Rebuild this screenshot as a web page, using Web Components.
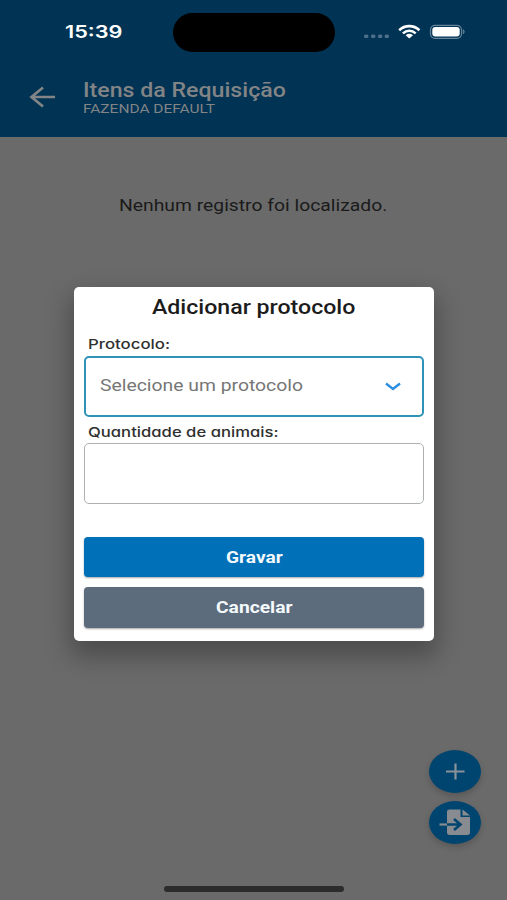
<!DOCTYPE html>
<html lang="pt-BR">
<head>
<meta charset="utf-8">
<meta name="viewport" content="width=device-width, initial-scale=1">
<title>Itens da Requisição</title>
<style>
  html, body {
    margin: 0;
    height: 100%;
  }
  body {
    font-family: Roboto, "Liberation Sans", sans-serif;
    overflow: hidden;
  }
</style>
</head>
<body>
<app-screen>
  <app-header slot="header">
    <status-bar slot="status" time="15:39"></status-bar>
    <wide-text slot="title" width="203">Itens da Requisição</wide-text>
    <wide-text slot="subtitle" width="132">FAZENDA DEFAULT</wide-text>
  </app-header>
  <wide-text class="empty" width="268">Nenhum registro foi localizado.</wide-text>
  <fab-button slot="actions" icon="add"></fab-button>
  <fab-button slot="actions" icon="import"></fab-button>
  <modal-card slot="modal">
    <wide-text slot="title" width="204">Adicionar protocolo</wide-text>
    <form-field active>
      <wide-text slot="label" width="82">Protocolo:</wide-text>
      <wide-text width="203">Selecione um protocolo</wide-text>
    </form-field>
    <form-field>
      <wide-text slot="label" width="190">Quantidade de animais:</wide-text>
    </form-field>
    <action-button slot="buttons"><wide-text width="57">Gravar</wide-text></action-button>
    <action-button slot="buttons" color="#5d6c7d"><wide-text width="77">Cancelar</wide-text></action-button>
  </modal-card>
</app-screen>

<script>
// text stretched to a given width
class WideText extends HTMLElement {
  connectedCallback() {
    const width = Number(this.getAttribute("width"));
    const shadowRoot = this.attachShadow({ mode: "open" });
    shadowRoot.innerHTML = `
      <style>
        :host {
          display: block;
          width: ${width}px;
          white-space: nowrap;
        }
        span {
          display: inline-block;
          transform-origin: 0 50%;
        }
      </style>
      <span><slot></slot></span>`;
    const span = shadowRoot.querySelector("span");
    span.style.transform = `scaleX(${width / span.offsetWidth})`;
  }
}

class StatusBar extends HTMLElement {
  connectedCallback() {
    const shadowRoot = this.attachShadow({ mode: "open" });
    shadowRoot.innerHTML = `
      <style>
        :host {
          display: grid;
          grid-template-columns: 173px 162px 1fr;
          height: 39px;
          padding-top: 13px;
          color: #fff;
        }
        .time {
          padding-left: 64.5px;
          font: 600 17.5px/38px Inter, sans-serif;
        }
        .island {
          border-radius: 20px;
          background: #000;
        }
        .icons {
          display: flex;
          padding-left: 29px;
        }
      </style>
      <div class="time"><wide-text width="57">${this.getAttribute("time")}</wide-text></div>
      <div class="island"></div>
      <div class="icons">
        <svg width="104" height="39" viewBox="364 13 104 39">
          <g fill="#4c708a">
            <rect x="364" y="34.5" width="4.4" height="3.6" rx="1.6"/>
            <rect x="371" y="34.5" width="4.4" height="3.6" rx="1.6"/>
            <rect x="378" y="34.5" width="4.4" height="3.6" rx="1.6"/>
            <rect x="384.600" y="34.5" width="4.4" height="3.6" rx="1.6"/>
          </g>
          <g fill="none" stroke="#fff" stroke-width="2.6">
            <path d="M399.200 30.200C405 24.700 413.600 24.700 419.400 30.200"/>
            <path d="M402.900 33.400C406.800 29.900 411.800 29.900 415.700 33.400"/>
          </g>
          <path d="M405.600 35.200Q409.300 32.300 413 35.200L409.300 38.500Z" fill="#fff"/>
          <rect x="430.500" y="25.300" width="31" height="13" rx="4.500" fill="none" stroke="#67859a" stroke-width="1.200"/>
          <rect x="432.300" y="27" width="27.400" height="9.600" rx="3" fill="#fff"/>
          <path d="M463.300 29.600Q465.400 31.800 463.300 34Z" fill="#67859a" stroke="#67859a" stroke-width=".6"/>
        </svg>
      </div>`;
  }
}

class AppHeader extends HTMLElement {
  connectedCallback() {
    const shadowRoot = this.attachShadow({ mode: "open" });
    shadowRoot.innerHTML = `
      <style>
        :host {
          display: block;
          height: 137px;
          background: #003354;
          color: #828486;
        }
        .bar {
          display: flex;
          padding: 26px 0 0 29px;
        }
        svg {
          margin: 8px 27px 0 0;
        }
        .title {
          height: 23px;
          padding-top: 1px;
          font: 500 19.5px/24px Roboto, sans-serif;
        }
        .subtitle {
          font: 400 13px/14px Roboto, sans-serif;
        }
      </style>
      <slot name="status"></slot>
      <div class="bar">
        <svg width="27" height="22" viewBox="0 0 27 22" fill="none" stroke="#828486" stroke-width="2.700">
          <path d="M26 11H3M14 1.500L2.500 11L14 20.500"/>
        </svg>
        <div>
          <div class="title"><slot name="title"></slot></div>
          <div class="subtitle"><slot name="subtitle"></slot></div>
        </div>
      </div>`;
  }
}

class FabButton extends HTMLElement {
  icons() {
    return {
      add: `<path d="M26.500 13.500V29.500M17 21.500H35.500" stroke="#8a9299" stroke-width="2.200"/>`,
      import: `
        <path d="M20.500 8.500H31.500V16H41V31.500Q41 34 38 34H21Q18 34 18 31.500V10.500Q18 8.500 20.500 8.500Z" fill="#888c90"/>
        <path d="M33.500 8.500L41 14.500H33.500Z" fill="#888c90"/>
        <path d="M10.500 23.500H18" stroke="#888c90" stroke-width="2.200"/>
        <path d="M18 23.500H31.500M25 18L31.500 23.500L25 29" fill="none" stroke="#00456f" stroke-width="2.600"/>`,
    }[this.getAttribute("icon")];
  }
  connectedCallback() {
    const shadowRoot = this.attachShadow({ mode: "open" });
    shadowRoot.innerHTML = `
      <style>
        :host {
          display: block;
          width: 52px;
          height: 43px;
          border-radius: 50%;
          background: #00456f;
          box-shadow: 0 3px 6px rgba(0, 0, 0, .18);
        }
        svg {
          display: block;
        }
      </style>
      <svg width="52" height="43" viewBox="0 0 52 43">${this.icons()}</svg>`;
  }
}

class FormField extends HTMLElement {
  connectedCallback() {
    const active = this.hasAttribute("active");
    const shadowRoot = this.attachShadow({ mode: "open" });
    shadowRoot.innerHTML = `
      <style>
        :host {
          display: block;
        }
        .label {
          box-sizing: border-box;
          height: 26px;
          padding: ${active ? "1px" : "2px"} 0 0 4px;
          color: #303030;
          font: 500 13.5px/26px Inter, sans-serif;
          font-feature-settings: "cv11" 1;
        }
        .box {
          display: flex;
          align-items: center;
          justify-content: space-between;
          box-sizing: border-box;
          height: 61px;
          padding: 0 ${active ? "21px 1px 14px" : "16px"};
          border: ${active ? "2px solid #2f93b8" : "1px solid #adb0b2"};
          border-radius: 5px;
          color: #767676;
          font: 400 16px/24px Roboto, sans-serif;
        }
      </style>
      <div class="label"><slot name="label"></slot></div>
      <div class="box">
        <slot></slot>
        ${active ? `
        <svg width="16" height="10" viewBox="0 0 16 10" fill="none" stroke="#2e8fe0" stroke-width="2.500">
          <path d="M1 2.500L8 8L15 2.500"/>
        </svg>` : ""}
      </div>`;
  }
}

class ActionButton extends HTMLElement {
  connectedCallback() {
    const shadowRoot = this.attachShadow({ mode: "open" });
    shadowRoot.innerHTML = `
      <style>
        :host {
          display: flex;
          justify-content: center;
          height: 40.500px;
          border-radius: 4px;
          background: ${this.getAttribute("color") || "#0070b8"};
          box-shadow: 0 1px 2px rgba(0, 0, 0, .35);
          color: #f4f9fc;
          font: 700 16.5px/41px Roboto, sans-serif;
        }
      </style>
      <slot></slot>`;
  }
}

class ModalCard extends HTMLElement {
  connectedCallback() {
    const shadowRoot = this.attachShadow({ mode: "open" });
    shadowRoot.innerHTML = `
      <style>
        :host {
          display: block;
          box-sizing: border-box;
          width: 360px;
          height: 354px;
          padding: 0 10px;
          border-radius: 5px;
          background: #fff;
          box-shadow: 0 12px 24px 4px rgba(0, 0, 0, .28);
        }
        .title {
          display: flex;
          justify-content: center;
          height: 43px;
          color: #1c1c1c;
          font: 500 19.5px/41px Roboto, sans-serif;
        }
        .buttons {
          display: flex;
          flex-direction: column;
          gap: 10px;
          padding-top: 33px;
        }
      </style>
      <div class="title"><slot name="title"></slot></div>
      <slot></slot>
      <div class="buttons"><slot name="buttons"></slot></div>`;
  }
}

class AppScreen extends HTMLElement {
  connectedCallback() {
    const shadowRoot = this.attachShadow({ mode: "open" });
    shadowRoot.innerHTML = `
      <style>
        :host {
          display: flex;
          flex-direction: column;
          position: relative;
          width: 507px;
          height: 900px;
          background: #6a6a6a;
        }
        main {
          display: flex;
          justify-content: center;
          flex: 1;
          padding: 55px 1px 0 0;
          color: #1a1a1a;
          font: 400 16.500px/27px Roboto, sans-serif;
        }
        .actions {
          display: flex;
          flex-direction: column;
          align-items: flex-end;
          gap: 8px;
          padding: 0 26px 42px 0;
        }
        .home {
          width: 180px;
          height: 6px;
          margin: 0 auto 8px 164px;
          border-radius: 3px;
          background: #2c2c2c;
        }
        .overlay {
          position: absolute;
          left: 74px;
          top: 286.500px;
        }
      </style>
      <slot name="header"></slot>
      <main><slot></slot></main>
      <div class="actions"><slot name="actions"></slot></div>
      <div class="home"></div>
      <div class="overlay"><slot name="modal"></slot></div>`;
  }
}

// containers first, so that the texts inherit their fonts before being measured
customElements.define("app-screen", AppScreen);
customElements.define("app-header", AppHeader);
customElements.define("status-bar", StatusBar);
customElements.define("fab-button", FabButton);
customElements.define("modal-card", ModalCard);
customElements.define("form-field", FormField);
customElements.define("action-button", ActionButton);
customElements.define("wide-text", WideText);
</script>
</body>
</html>
